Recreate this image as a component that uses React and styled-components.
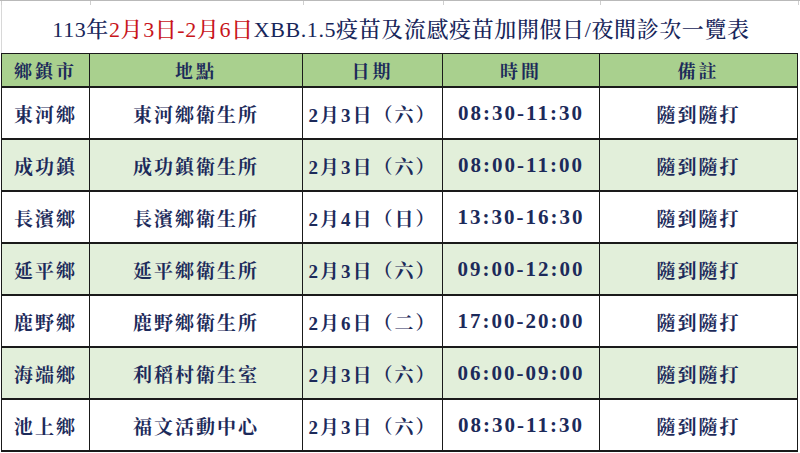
import styled, { createGlobalStyle } from "styled-components";

const GlobalStyle = createGlobalStyle`
  html, body {
    margin: 0;
    padding: 0;
    background: #ffffff;
  }
  body {
    font-family: "Liberation Serif", "Noto Serif CJK TC", "Noto Sans CJK TC", serif;
    color: #1c2a5a;
  }
`;

const Sheet = styled.div`
  width: 800px;
  height: 453px;
  overflow: hidden;
  border-top: 1px solid #b9b9b9;
  box-sizing: border-box;
`;

const GridStrip = styled.div`
  display: grid;
  grid-template-columns: 89px 213px 140px 157px 198px;
  height: 4px;
  border-left: 1px solid #d0d0d0;
  margin-left: 1px;
`;

const StripCell = styled.div`
  border-right: 1px solid #cfcfcf;
`;

const Title = styled.h1`
  margin: 0;
  height: 48px;
  display: flex;
  align-items: center;
  justify-content: center;
  padding-bottom: 4px;
  box-sizing: border-box;
  font-size: 22px;
  font-weight: 500;
  letter-spacing: 0.6px;
  color: #18265a;
  border-left: 1px solid #d8d8d8;
  margin-left: 1px;
`;

const Red = styled.span`
  color: #c8151b;
`;

const Table = styled.table`
  border-collapse: collapse;
  table-layout: fixed;
  width: 797px;
  margin-left: 1px;
`;

const HeadCell = styled.th`
  height: 32px;
  padding: 0;
  background: #a9d08e;
  border: 1.5px solid #1a1a1a;
  font-size: 18px;
  font-weight: 700;
  letter-spacing: 3px;
  text-align: center;
  color: #1c2a5a;
`;

const Row = styled.tr`
  background: ${(p) => (p.$alt ? "#e2efda" : "#ffffff")};
`;

const Cell = styled.td`
  height: 50px;
  padding: 0;
  border: 2px solid #1a1a1a;
  border-left-width: 1.5px;
  border-right-width: 1.5px;
  text-align: center;
  font-size: ${(p) => (p.$num ? "21px" : "19px")};
  font-weight: 700;
  letter-spacing: ${(p) => (p.$num ? "2px" : "2px")};
  color: #1c2a5a;
`;

const widths = [88, 213, 140, 157, 198];
const headers = ["鄉鎮市", "地點", "日期", "時間", "備註"];

const rows = [
  ["東河鄉", "東河鄉衛生所", "2月3日（六）", "08:30-11:30", "隨到隨打"],
  ["成功鎮", "成功鎮衛生所", "2月3日（六）", "08:00-11:00", "隨到隨打"],
  ["長濱鄉", "長濱鄉衛生所", "2月4日（日）", "13:30-16:30", "隨到隨打"],
  ["延平鄉", "延平鄉衛生所", "2月3日（六）", "09:00-12:00", "隨到隨打"],
  ["鹿野鄉", "鹿野鄉衛生所", "2月6日（二）", "17:00-20:00", "隨到隨打"],
  ["海端鄉", "利稻村衛生室", "2月3日（六）", "06:00-09:00", "隨到隨打"],
  ["池上鄉", "福文活動中心", "2月3日（六）", "08:30-11:30", "隨到隨打"],
];

export default function App() {
  return (
    <>
      <GlobalStyle />
      <Sheet>
        <GridStrip>
          {widths.map((w, i) => (
            <StripCell key={i} />
          ))}
        </GridStrip>
        <Title>
          113年<Red>2月3日-2月6日</Red>XBB.1.5疫苗及流感疫苗加開假日/夜間診次一覽表
        </Title>
        <Table>
          <colgroup>
            {widths.map((w, i) => (
              <col key={i} style={{ width: w }} />
            ))}
          </colgroup>
          <thead>
            <tr>
              {headers.map((h) => (
                <HeadCell key={h}>{h}</HeadCell>
              ))}
            </tr>
          </thead>
          <tbody>
            {rows.map((r, i) => (
              <Row key={i} $alt={i % 2 === 1}>
                {r.map((c, j) => (
                  <Cell key={j} $num={j === 3}>
                    {c}
                  </Cell>
                ))}
              </Row>
            ))}
          </tbody>
        </Table>
      </Sheet>
    </>
  );
}
